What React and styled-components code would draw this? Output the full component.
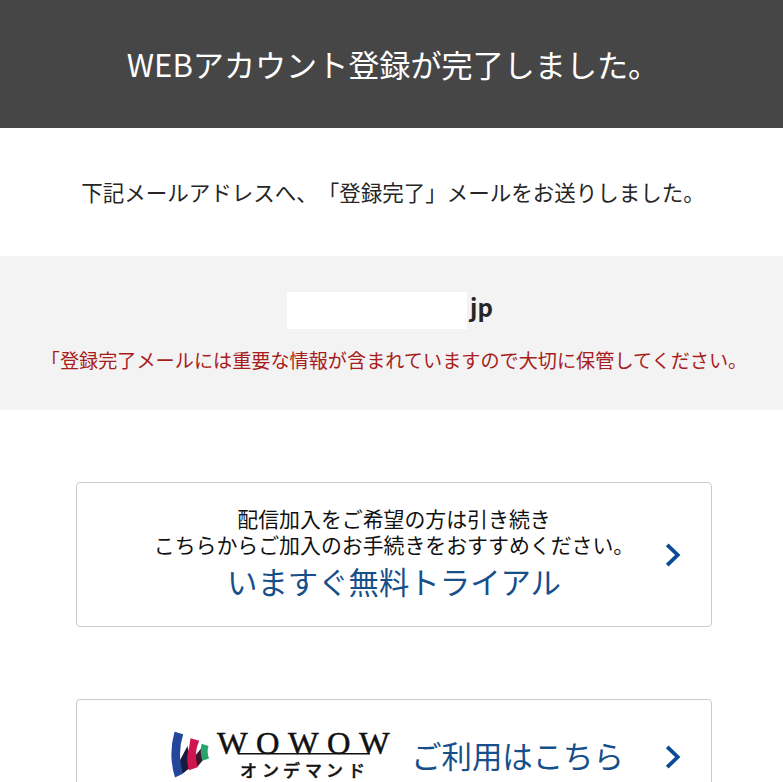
import styled, { createGlobalStyle } from 'styled-components'

const GlobalStyle = createGlobalStyle`
    body {
        margin: 0;
        background: #fff;
        color: #262626;
        font-family: 'Noto Sans CJK JP', sans-serif;
        text-spacing-trim: space-all;
        overflow: hidden;
    }
`

const PageWrapper = styled.div`
    height: 782px;
    overflow: hidden;
`

const Header = styled.header`
    display: flex;
    justify-content: center;
    align-items: center;
    box-sizing: border-box;
    height: 128px;
    padding: 0 0 0 3px;
    background: #464646;
`

const Title = styled.h1`
    margin: 0;
    color: white;
    font-size: 31.1px;
    font-weight: 400;
    line-height: 46px;
    white-space: nowrap;
`

const Lead = styled.p`
    box-sizing: border-box;
    height: 128px;
    margin: 0;
    padding: 47px 0 0 3px;
    font-size: 21.5px;
    line-height: 34px;
    text-align: center;
    white-space: nowrap;
`

const MailBlock = styled.section`
    display: flex;
    flex-direction: column;
    align-items: center;
    box-sizing: border-box;
    height: 154px;
    padding-top: 36px;
    background: #f3f3f3;
`

const MailAddress = styled.p`
    display: flex;
    align-items: flex-start;
    gap: 3px;
    height: 37px;
    margin: 0 3px 0 0;
    font-size: 24px;
    font-weight: 700;
    line-height: 29px;
`

const MailMask = styled.span`
    width: 180px;
    height: 37px;
    background: white;
`

const Caution = styled.p`
    margin: 15px 0 0 5px;
    color: #a81c1c;
    font-size: 19.15px;
    line-height: 32px;
    white-space: nowrap;
`

const CardList = styled.div`
    display: flex;
    flex-direction: column;
    gap: 72px;
    padding: 72px 71px 0 76px;
`

const Card = styled.a`
    display: flex;
    align-items: center;
    box-sizing: border-box;
    height: ${({ $short }) => ($short ? '116px' : '145px')};
    border: 1px solid #ccc;
    border-radius: 4px;
    padding-right: 30px;
    color: #111;
    text-decoration: none;
`

const CardContent = styled.div`
    flex: 1;
    display: flex;
    flex-direction: ${({ $row }) => ($row ? 'row' : 'column')};
    align-items: center;
    justify-content: center;
    padding: ${({ $row }) => ($row ? '0 0 4px 51px' : '1px 0 0 46px')};
    white-space: nowrap;
`

const CardText = styled.span`
    font-size: 20.9px;
    line-height: 26px;
`

const CardLink = styled.span`
    color: #174f8a;
    font-size: 30.4px;
    line-height: 48px;
`

const Chevron = styled.svg`
    flex: none;
    width: 16px;
    height: 24px;
`

const Logo = styled.svg`
    flex: none;
    width: 224px;
    height: 52px;
    margin-right: 18px;
`

function Arrow() {
    return (
        <Chevron viewBox="0 0 16 24" fill="none" stroke="#0b4a94" strokeWidth="3.8" aria-hidden="true">
            <path d="M2.2 1.8 L12.7 12 L2.2 22.2" />
        </Chevron>
    )
}

function WowowLogo() {
    return (
        <Logo viewBox="0 0 224 52">
            <path d="M10 33 L18.5 17 L22 38 L13.5 44.8 Z" fill="#171b3d" />
            <path d="M25 28 L32.5 19 L34 31 L28.3 38 Z" fill="#42152e" />
            <path d="M5.5 2.7 L14.2 5.3 Q8 24 13.8 44.8 L6 48.5 Q-1 26 5.5 2.7Z" fill="#24479b" />
            <path d="M21.5 9.2 L30.3 11.7 Q24.5 24 28.6 38.3 L20 41.3 Q17.5 34 18.5 25 Q20.5 18 21.5 9.2Z" fill="#cf164f" />
            <path d="M32.6 14.8 L39.5 17 Q37.5 23 40 29.5 L33.3 31.8 Q30.6 23 32.6 14.8Z" fill="#26a568" />
            <text x="48 87 119 158 190" y="25" fontFamily="'Liberation Serif', serif" fontSize="32.5" fill="#111" stroke="#111" strokeWidth="0.5">WOWOW</text>
            <path d="M69 24.8 H201" stroke="#111" strokeWidth="1.4" />
            <text x="71 93 114 136 157 179" y="47.7" fontFamily="'Noto Sans CJK JP', sans-serif" fontSize="17" fontWeight="500" fill="#111" stroke="#111" strokeWidth="0.4">オンデマンド</text>
        </Logo>
    )
}

function App() {
    return (
        <PageWrapper>
            <GlobalStyle />
            <Header>
                <Title>WEBアカウント登録が完了しました。</Title>
            </Header>
            <Lead>下記メールアドレスへ、「登録完了」メールをお送りしました。</Lead>
            <MailBlock>
                <MailAddress>
                    <MailMask />
                    jp
                </MailAddress>
                <Caution>「登録完了メールには重要な情報が含まれていますので大切に保管してください。</Caution>
            </MailBlock>
            <CardList>
                <Card href="#">
                    <CardContent>
                        <CardText>配信加入をご希望の方は引き続き</CardText>
                        <CardText>こちらからご加入のお手続きをおすすめください。</CardText>
                        <CardLink>いますぐ無料トライアル</CardLink>
                    </CardContent>
                    <Arrow />
                </Card>
                <Card href="#" $short>
                    <CardContent $row>
                        <WowowLogo />
                        <CardLink>ご利用はこちら</CardLink>
                    </CardContent>
                    <Arrow />
                </Card>
            </CardList>
        </PageWrapper>
    )
}

export default App
